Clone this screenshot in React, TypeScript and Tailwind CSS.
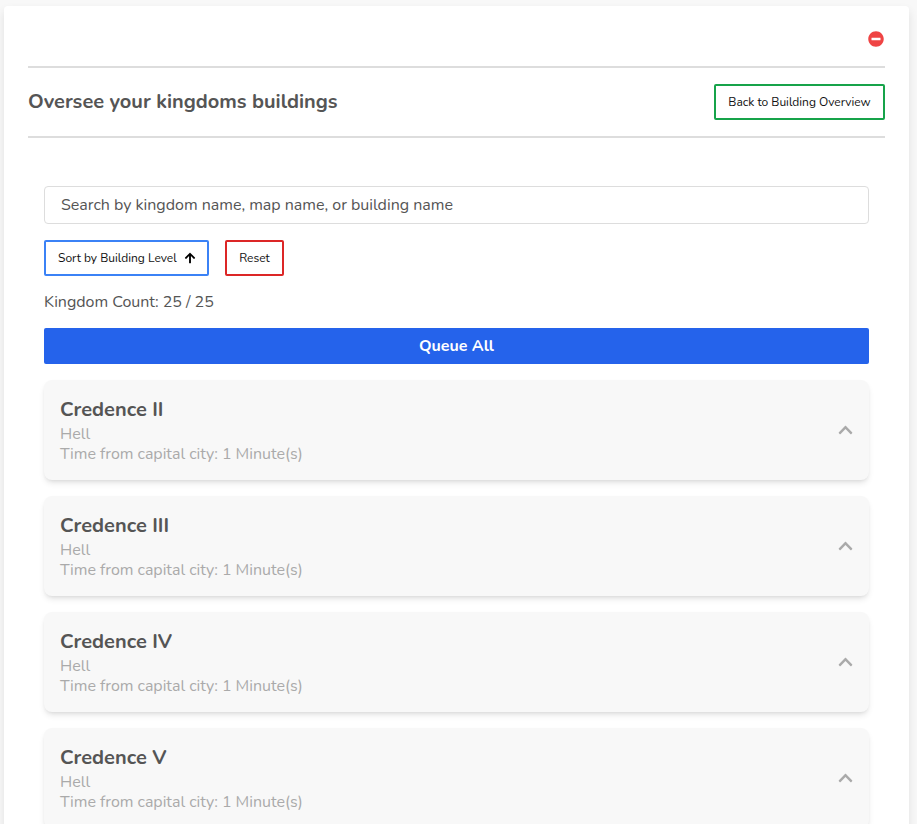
import React from "react";
import { FaArrowUp, FaChevronUp, FaMinusCircle } from "react-icons/fa";

const kingdoms = ["Credence II", "Credence III", "Credence IV", "Credence V"];

function KingdomCard({ name }: { name: string }) {
  return (
    <div className="flex h-[100px] shrink-0 items-center justify-between rounded-lg bg-[#f8f8f8] px-4 shadow-md">
      <div>
        <h2 className="text-xl leading-7 font-bold text-[#555555]">{name}</h2>
        <p className="text-base leading-5 text-[#aaaaaa]">Hell</p>
        <p className="text-base leading-5 tracking-[-0.02px] text-[#aaaaaa]">
          Time from capital city: 1 Minute(s)
        </p>
      </div>
      <FaChevronUp className="h-4 w-[15px] text-[#aaaaaa]" />
    </div>
  );
}

export default function App() {
  return (
    <div className="h-[824px] overflow-hidden bg-[#f8f8f8] pt-1.5 pr-2 pl-1 font-[Nunito,Lato,sans-serif] text-[#555555] antialiased">
      <div className="h-[900px] rounded bg-white px-6 pt-[25px] shadow-[0_5px_10px_rgba(0,0,0,0.1)]">
        <div className="flex h-[35px] justify-end">
          <button aria-label="Close" className="mr-px flex size-4 text-[#ef4444]">
            <FaMinusCircle className="size-4" />
          </button>
        </div>
        <div className="flex h-[72px] items-center justify-between border-y-2 border-[#dddddd]">
          <h1 className="text-xl font-bold">Oversee your kingdoms buildings</h1>
          <button className="h-9 w-[171px] rounded-xs border-2 border-[#16a34a] text-xs tracking-[-0.01px] text-[#111111]">
            Back to Building Overview
          </button>
        </div>
        <div className="flex flex-col px-4 pt-12">
          <div className="flex h-[38px] items-center rounded border border-[#dddddd] px-4 text-base tracking-[-0.01px]">
            Search by kingdom name, map name, or building name
          </div>
          <div className="mt-4 flex gap-4">
            <button className="flex h-9 w-[165px] items-center justify-between rounded-xs border-2 border-[#3b82f6] pr-[11px] pl-3 text-xs whitespace-nowrap text-[#111111]">
              Sort by Building Level
              <FaArrowUp className="size-3 text-black" />
            </button>
            <button className="h-9 w-[59px] rounded-xs border-2 border-[#dc2626] text-xs text-[#111111]">
              Reset
            </button>
          </div>
          <p className="mt-4 text-base leading-5 tracking-[-0.02px]">Kingdom Count: 25 / 25</p>
          <button className="mt-4 h-9 rounded-xs bg-[#2563eb] text-base font-bold text-white">
            Queue All
          </button>
          <div className="mt-4 flex flex-col gap-4">
            {kingdoms.map((name) => (
              <KingdomCard key={name} name={name} />
            ))}
          </div>
        </div>
      </div>
    </div>
  );
}
